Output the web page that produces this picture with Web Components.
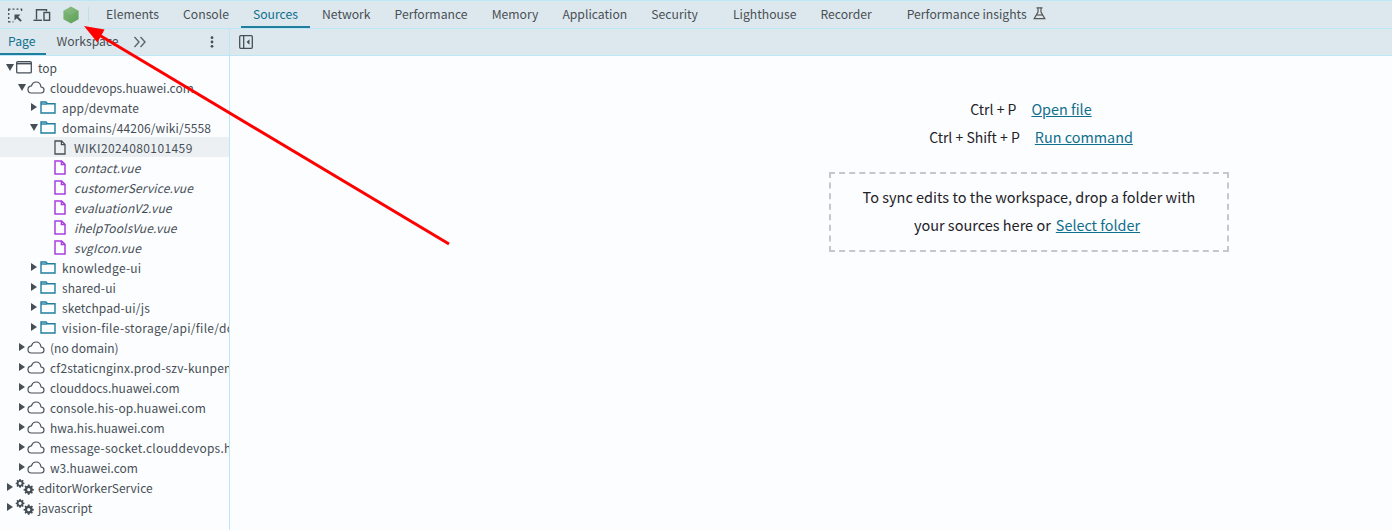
<!DOCTYPE html>
<html lang="en">
<head>
<meta charset="utf-8">
<title>DevTools Sources</title>
<style>
html,body{margin:0;padding:0;height:530px;overflow:hidden;background:#fcfdff;font-family:"Noto Sans CJK SC","Noto Sans",sans-serif;color:#333}
</style>
</head>
<body>
<dt-app></dt-app>
<script>
const ICONS={
 inspect:'<svg width="16" height="16" viewBox="0 0 16 16" fill="none" stroke="#474f56" stroke-width="1.3"><path d="M1.7 4V2.2H3.5M5.5 2.2H7.5M9.5 2.2H11.5M13.5 2.2H14.6V4M1.7 6V8M1.7 10V12M1.7 14V14.8H3.5M5.5 14.8H6.5"/><path d="M7.5 7.5H13.5L11.3 9.7L14.8 13.4L13.4 14.8L9.8 11.2L7.5 13.4Z" fill="#474f56" stroke="none"/></svg>',
 device:'<svg width="18" height="16" viewBox="0 0 18 16" fill="none" stroke="#474f56" stroke-width="1.4"><path d="M3.5 12.5V2.7H13.5V4.5"/><path d="M.5 13.3H9"/><rect x="11" y="5.5" width="5.6" height="7.8"/></svg>',
 node:'<svg width="18" height="18" viewBox="0 0 18 18"><defs><linearGradient id="n" x1="0" y1="0" x2="1" y2="1"><stop offset="0" stop-color="#82ba79"/><stop offset="1" stop-color="#5f9f5a"/></linearGradient></defs><path d="M9 .5L16.6 4.7V13.3L9 17.5L1.4 13.3V4.7Z" fill="url(#n)"/><path d="M9 .5L16.6 4.7L9 9L1.4 4.7Z" fill="#fff" opacity=".08"/></svg>',
 flask:'<svg width="13" height="13" viewBox="0 0 13 13" fill="none" stroke="#555" stroke-width="1.2"><path d="M3.5 .8H9.5M5 .8V5L1.2 11.6H11.8L8 5V.8"/><path d="M3.4 8H9.6" /></svg>',
 more:'<svg width="14" height="12" viewBox="0 0 14 12" fill="none" stroke="#5c6670" stroke-width="1.4"><path d="M1.5 1L6 6L1.5 11M7.5 1L12 6L7.5 11"/></svg>',
 dots:'<svg width="4" height="12" viewBox="0 0 4 12" fill="#474f56"><circle cx="2" cy="1.7" r="1.4"/><circle cx="2" cy="6" r="1.4"/><circle cx="2" cy="10.3" r="1.4"/></svg>',
 panel:'<svg width="14" height="14" viewBox="0 0 14 14" fill="none" stroke="#474f56" stroke-width="1.3"><rect x=".7" y=".7" width="12.6" height="12.6" rx="1"/><path d="M4.7 .7V13.3"/><path d="M10.5 4.2L7.6 7L10.5 9.8Z" fill="#474f56" stroke="none"/></svg>',
 frame:'<svg width="16" height="13" viewBox="0 0 16 13" fill="none" stroke="#474f56" stroke-width="1.3"><rect x=".7" y=".7" width="14.6" height="11.2" rx="1"/><path d="M.7 2.6H15.3" stroke-width="1.6"/></svg>',
 cloud:'<svg width="18" height="13" viewBox="0 0 18 13" fill="none" stroke="#474f56" stroke-width="1.2"><path d="M4.2 12H13.8C15.7 12 17 10.7 17 9C17 7.3 15.7 6.1 14 6C13.6 3 11.6 1 9.2 1C7 1 5.2 2.6 4.5 4.8C2.4 5 1 6.6 1 8.5C1 10.5 2.3 12 4.2 12Z"/></svg>',
 folder:'<svg width="16" height="13" viewBox="0 0 16 13" fill="none" stroke="#1f7f9d" stroke-width="1.4"><path d="M1 1H6L7.4 2.8H15V12H1Z"/><path d="M1 3H7" /></svg>',
 file:'<svg width="12" height="15" viewBox="0 0 12 15" fill="none" stroke="#474f56" stroke-width="1.3"><path d="M1 1H7.6L11 4.4V14H1Z"/><path d="M7.4 1V4.6H11"/></svg>',
 vue:'<svg width="12" height="15" viewBox="0 0 12 15" fill="none" stroke="#a83fe0" stroke-width="1.5"><path d="M1 1H7.6L11 4.4V14H1Z"/><path d="M7.4 1V4.6H11"/></svg>',
 gears:'<svg width="19" height="16" viewBox="0 0 19 16" fill="#474f56"><path d="M5.1 0H6.9L7.1 1.4L8.2 1.9L9.4 1.1L10.6 2.3L9.8 3.4L10.2 4.6L11.6 4.8V6.4L10.2 6.7L9.8 7.8L10.6 9L9.4 10.1L8.2 9.3L7.1 9.8L6.9 11.2H5.1L4.8 9.8L3.7 9.3L2.6 10.1L1.4 9L2.2 7.8L1.8 6.7L.4 6.4V4.8L1.8 4.6L2.2 3.4L1.4 2.3L2.6 1.1L3.7 1.9L4.8 1.4Z M6 3.6A2 2 0 1 0 6 7.6A2 2 0 1 0 6 3.6Z" fill-rule="evenodd" transform="translate(.4 0) scale(.78)"/><path d="M5.1 0H6.9L7.1 1.4L8.2 1.9L9.4 1.1L10.6 2.3L9.8 3.4L10.2 4.6L11.6 4.8V6.4L10.2 6.7L9.8 7.8L10.6 9L9.4 10.1L8.2 9.3L7.1 9.8L6.9 11.2H5.1L4.8 9.8L3.7 9.3L2.6 10.1L1.4 9L2.2 7.8L1.8 6.7L.4 6.4V4.8L1.8 4.6L2.2 3.4L1.4 2.3L2.6 1.1L3.7 1.9L4.8 1.4Z M6 3.9A1.7 1.7 0 1 0 6 7.3A1.7 1.7 0 1 0 6 3.9Z" fill-rule="evenodd" transform="translate(8.2 5.5) scale(.92)"/></svg>'
};
function def(name,css,html){
  customElements.define(name,class extends HTMLElement{
    connectedCallback(){
      if(this.shadowRoot)return;
      const r=this.attachShadow({mode:'open'});
      r.innerHTML='<style>'+css+'</style>'+(typeof html==='function'?html(this):html);
    }
  });
}
def('dt-icon',':host{display:inline-flex;align-items:center;justify-content:center;flex:none}svg{display:block}',h=>ICONS[h.getAttribute('name')]);

def('dt-tab',`:host{display:flex;align-items:center;height:27px;padding:0 12px;flex:none;box-sizing:border-box;font-size:12.2px;color:#4a4f54;border-bottom:2px solid transparent;white-space:nowrap;gap:6px}
:host([active]){color:#0f6f8c;border-bottom-color:#1f7f9d}
:host([gap]){margin-left:11px}`,'<slot></slot>');

def('dt-subtab',`:host{display:flex;align-items:center;height:26px;box-sizing:border-box;font-size:12.2px;color:#4a4f54;border-bottom:2px solid transparent;padding:0 10px 0 8px;flex:none;white-space:nowrap}
:host([active]){color:#0f6f8c;border-bottom-color:#1f7f9d;padding:0 11px 0 8px}
:host([offset]){margin-left:2px}`,'<slot></slot>');

def('dt-topbar',`:host{display:flex;align-items:center;height:27px;background:#dce8ee;border-top:1px solid #bde6f6;border-bottom:1px solid #bde6f6}
.tools{display:flex;align-items:center;width:88px;height:100%;flex:none;padding-left:7px;box-sizing:border-box;gap:10px}
.sep{width:1px;height:15px;background:#c4dde8;flex:none;margin-right:5px}
.node{margin-left:1px}`,
`<div class="tools"><dt-icon name="inspect"></dt-icon><dt-icon name="device"></dt-icon><dt-icon class="node" name="node"></dt-icon></div><div class="sep"></div><slot></slot>`);

def('dt-sidebar',`:host{display:flex;flex-direction:column;width:230px;flex:none;box-sizing:border-box;border-right:1px solid #bde6f6;overflow:hidden;background:#fcfdff}
.bar{display:flex;align-items:center;height:27px;background:#dce8ee;border-bottom:1px solid #bde6f6;box-sizing:border-box;flex:none}
.more{margin-left:4px}
.dots{margin-left:auto;margin-right:15px}
.tree{padding-top:1px;font-size:12px}`,
`<div class="bar"><dt-subtab active>Page</dt-subtab><dt-subtab offset>Workspace</dt-subtab><dt-icon class="more" name="more"></dt-icon><dt-icon class="dots" name="dots"></dt-icon></div><div class="tree"><slot></slot></div>`);

def('dt-row',`:host{display:flex;align-items:center;height:20px;overflow:hidden;white-space:nowrap;color:#474f56;padding-left:calc(4px + 12px * var(--l,0));box-sizing:border-box;letter-spacing:var(--ls,0)}
:host([selected]){background:#ecf0f3}
:host([italic]){font-style:italic;letter-spacing:.12px}
.a{width:12px;height:20px;flex:none;display:flex;align-items:center;justify-content:center}
.open{width:0;height:0;border-left:4px solid transparent;border-right:4px solid transparent;border-top:7px solid #474f56}
.closed{width:0;height:0;border-top:4px solid transparent;border-bottom:4px solid transparent;border-left:6px solid #474f56}
.i{flex:none;display:flex;justify-content:flex-start}`,
h=>{h.style.setProperty('--l',h.getAttribute('level')||0);
 h.style.setProperty('--ls',(h.getAttribute('ls')||0)+'px');
 const a=h.getAttribute('arrow');const ic=h.getAttribute('icon');
 const pad={frame:0,cloud:-1,folder:0,file:2,vue:2,gears:-1}[ic];
 return `<span class="a">${a?`<span class="${a}"></span>`:''}</span><span class="i" style="margin-left:${pad}px;width:${22-pad}px"><dt-icon name="${ic}"></dt-icon></span><slot></slot>`});

def('dt-link',`:host{display:inline;color:#0f6f8c;text-decoration:underline;font-size:14.4px}`,'<slot></slot>');
def('dt-line',`:host{display:flex;justify-content:center;gap:5px;height:28px;white-space:nowrap}
:host([shift]){padding-right:4px}`,'<slot></slot>');
def('dt-shortcut',`:host{display:flex;justify-content:center;gap:15px;height:28px;line-height:28px;white-space:nowrap;padding-left:4px}`,'<slot></slot>');
def('dt-dropzone',`:host{display:block;margin-top:21px;border:2px dashed #c4c7cc;padding:9px 30px 11px;line-height:28px;box-sizing:border-box;width:400px;font-size:14.5px}`,'<slot></slot>');
def('dt-main',`:host{display:flex;flex-direction:column;flex:1;min-width:0;background:#fcfdff}
.bar{display:flex;align-items:center;height:27px;background:#dce8ee;border-bottom:1px solid #bde6f6;box-sizing:border-box;padding-left:9px;flex:none}
.body{padding:39px 0 0 599px;font-size:14px;color:#1f2328;width:400px}`,
`<div class="bar"><dt-icon name="panel"></dt-icon></div><div class="body"><slot></slot></div>`);

def('dt-app',`:host{display:block;position:relative;width:1392px;height:530px;overflow:hidden}
.col{display:flex;flex-direction:column;height:100%}
.split{display:flex;flex:1;min-height:0}
.arrow{position:absolute;left:0;top:0;pointer-events:none}`,
`<div class="col">
<dt-topbar>
<dt-tab>Elements</dt-tab><dt-tab>Console</dt-tab><dt-tab active>Sources</dt-tab><dt-tab>Network</dt-tab><dt-tab>Performance</dt-tab><dt-tab>Memory</dt-tab><dt-tab>Application</dt-tab><dt-tab>Security</dt-tab><dt-tab gap>Lighthouse</dt-tab><dt-tab>Recorder</dt-tab><dt-tab gap>Performance insights <dt-icon name="flask"></dt-icon></dt-tab>
</dt-topbar>
<div class="split">
<dt-sidebar>
<dt-row level="0" arrow="open" icon="frame">top</dt-row>
<dt-row level="1" arrow="open" icon="cloud">clouddevops.huawei.com</dt-row>
<dt-row level="2" arrow="closed" icon="folder" ls=".2">app/devmate</dt-row>
<dt-row level="2" arrow="open" icon="folder" ls=".15">domains/44206/wiki/5558</dt-row>
<dt-row level="3" icon="file" selected ls=".4">WIKI2024080101459</dt-row>
<dt-row level="3" icon="vue" italic>contact.vue</dt-row>
<dt-row level="3" icon="vue" italic>customerService.vue</dt-row>
<dt-row level="3" icon="vue" italic>evaluationV2.vue</dt-row>
<dt-row level="3" icon="vue" italic>ihelpToolsVue.vue</dt-row>
<dt-row level="3" icon="vue" italic>svgIcon.vue</dt-row>
<dt-row level="2" arrow="closed" icon="folder" ls=".25">knowledge-ui</dt-row>
<dt-row level="2" arrow="closed" icon="folder" ls=".1">shared-ui</dt-row>
<dt-row level="2" arrow="closed" icon="folder" ls=".1">sketchpad-ui/js</dt-row>
<dt-row level="2" arrow="closed" icon="folder" ls=".3">vision-file-storage/api/file/download</dt-row>
<dt-row level="1" arrow="closed" icon="cloud">(no domain)</dt-row>
<dt-row level="1" arrow="closed" icon="cloud" ls=".2">cf2staticnginx.prod-szv-kunpeng.huawei.com</dt-row>
<dt-row level="1" arrow="closed" icon="cloud">clouddocs.huawei.com</dt-row>
<dt-row level="1" arrow="closed" icon="cloud" ls=".1">console.his-op.huawei.com</dt-row>
<dt-row level="1" arrow="closed" icon="cloud">hwa.his.huawei.com</dt-row>
<dt-row level="1" arrow="closed" icon="cloud" ls=".2">message-socket.clouddevops.huawei.com</dt-row>
<dt-row level="1" arrow="closed" icon="cloud">w3.huawei.com</dt-row>
<dt-row level="0" arrow="closed" icon="gears">editorWorkerService</dt-row>
<dt-row level="0" arrow="closed" icon="gears">javascript</dt-row>
</dt-sidebar>
<dt-main>
<dt-shortcut><span>Ctrl + P</span><dt-link>Open file</dt-link></dt-shortcut>
<dt-shortcut><span>Ctrl + Shift + P</span><dt-link>Run command</dt-link></dt-shortcut>
<dt-dropzone><dt-line>To sync edits to the workspace, drop a folder with</dt-line><dt-line shift><span>your sources here or</span><dt-link>Select folder</dt-link></dt-line></dt-dropzone>
</dt-main>
</div>
</div>
<svg class="arrow" width="1392" height="530" viewBox="0 0 1392 530"><path d="M449 244L100 35.5" stroke="#f00" stroke-width="3" fill="none"/><path d="M84 26L104.6 29.5L97.4 42.5Z" fill="#f00"/></svg>`);
</script>
</body>
</html>
